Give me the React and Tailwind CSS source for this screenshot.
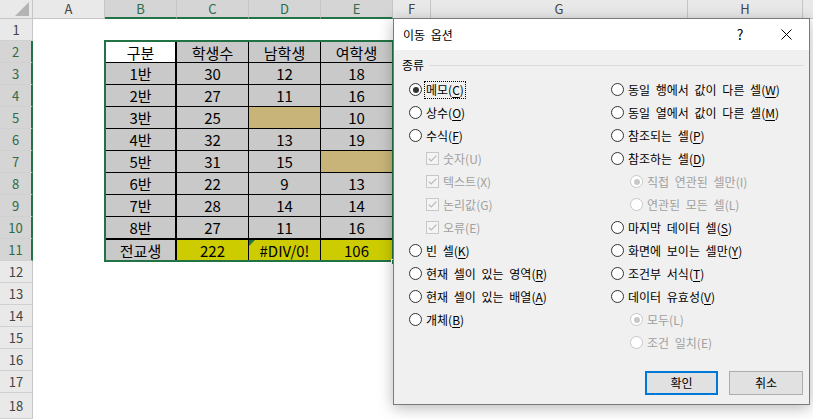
import React from "react";

const columns = [
  { label: "A", w: "w-[72px]" },
  { label: "B", w: "w-[72px]", sel: true },
  { label: "C", w: "w-[72px]", sel: true },
  { label: "D", w: "w-[72px]", sel: true },
  { label: "E", w: "w-[72px]", sel: true },
  { label: "F", w: "w-[38px]" },
  { label: "G", w: "w-[257px]" },
  { label: "H", w: "w-[115px]" },
];

const rows = [
  ["구분", "학생수", "남학생", "여학생"],
  ["1반", "30", "12", "18"],
  ["2반", "27", "11", "16"],
  ["3반", "25", null, "10"],
  ["4반", "32", "13", "19"],
  ["5반", "31", "15", null],
  ["6반", "22", "9", "13"],
  ["7반", "28", "14", "14"],
  ["8반", "27", "11", "16"],
  ["전교생", "222", "#DIV/0!", "106"],
];

const leftOptions = [
  { text: "메모", hot: "C", checked: true, focus: true },
  { text: "상수", hot: "O" },
  { text: "수식", hot: "F" },
  { kind: "check", text: "숫자", hot: "U", disabled: true },
  { kind: "check", text: "텍스트", hot: "X", disabled: true },
  { kind: "check", text: "논리값", hot: "G", disabled: true },
  { kind: "check", text: "오류", hot: "E", disabled: true },
  { text: "빈 셀", hot: "K" },
  { text: "현재 셀이 있는 영역", hot: "R" },
  { text: "현재 셀이 있는 배열", hot: "A" },
  { text: "개체", hot: "B" },
];

const rightOptions = [
  { text: "동일 행에서 값이 다른 셀", hot: "W" },
  { text: "동일 열에서 값이 다른 셀", hot: "M" },
  { text: "참조되는 셀", hot: "P" },
  { text: "참조하는 셀", hot: "D" },
  { text: "직접 연관된 셀만", hot: "I", disabled: true, checked: true, sub: true },
  { text: "연관된 모든 셀", hot: "L", disabled: true, sub: true },
  { text: "마지막 데이터 셀", hot: "S" },
  { text: "화면에 보이는 셀만", hot: "Y" },
  { text: "조건부 서식", hot: "T" },
  { text: "데이터 유효성", hot: "V" },
  { text: "모두", hot: "L", disabled: true, checked: true, sub: true },
  { text: "조건 일치", hot: "E", disabled: true, sub: true },
];

function Radio({ checked, disabled }) {
  return (
    <span
      className={`flex h-[13px] w-[13px] shrink-0 items-center justify-center rounded-full border bg-white ${
        disabled ? "border-[#c8c8c8]" : "border-[#333333]"
      }`}
    >
      {checked && (
        <span className={`h-[6px] w-[6px] rounded-full ${disabled ? "bg-[#c8c8c8]" : "bg-[#333333]"}`} />
      )}
    </span>
  );
}

function Check() {
  return (
    <span className="flex h-[13px] w-[13px] shrink-0 items-center justify-center border border-[#c8c8c8] bg-[#f4f4f4]">
      <svg width="11" height="11" viewBox="0 0 11 11">
        <path d="M1.8 5.6 L4.2 8 L9.4 2.6" fill="none" stroke="#b8b8b8" strokeWidth="1.2" />
      </svg>
    </span>
  );
}

function Option({ kind = "radio", text, hot, checked, disabled, focus, sub }) {
  let indent = "";
  if (kind === "check") indent = "pl-[17px]";
  if (sub) indent = "pl-[19px]";
  return (
    <div className={`flex h-[23px] items-center ${indent}`}>
      {kind === "radio" ? <Radio checked={checked} disabled={disabled} /> : <Check />}
      <span
        className={`ml-[2px] whitespace-nowrap border border-dotted px-[1px] text-[12px] leading-[16px] [word-spacing:3px] ${
          focus ? "border-black" : "border-transparent"
        } ${disabled ? "text-[#a0a0a0]" : "text-black"}`}
      >
        {text}(
        {disabled ? hot : <span className="underline underline-offset-2">{hot}</span>})
      </span>
    </div>
  );
}

function Cell({ value, r, c }) {
  const last = r === rows.length - 1;
  let bg = "bg-[#c9c9c9]";
  if (r === 0 && c === 0) bg = "bg-white";
  else if (value === null) bg = "bg-[#c8b478]";
  else if (last && c > 0) bg = "bg-[#cccc00]";
  return (
    <div
      className={`relative flex h-[22px] items-center justify-center border-b border-black text-[15px] leading-none text-black ${bg} ${
        c === 0 ? "border-l border-r-2" : "border-r"
      } ${r === 0 || last ? "border-t" : ""}`}
    >
      {value}
      {value === "#DIV/0!" && (
        <span className="absolute left-0 top-0 h-0 w-0 border-r-[6px] border-t-[6px] border-r-transparent border-t-[#217346]" />
      )}
    </div>
  );
}

function Dialog() {
  return (
    <div className="absolute left-[393px] top-[18px] flex h-[387px] w-[417px] flex-col border border-[#7a7a7a] bg-[#f0f0f0] shadow-[0_3px_14px_rgba(0,0,0,0.28)]">
      {/* title bar */}
      <div className="flex h-[31px] shrink-0 items-center bg-white pl-[9px]">
        <span className="text-[12px] text-black [word-spacing:3px]">이동 옵션</span>
        <span className="ml-auto flex w-[46px] justify-center text-[14px] text-black">?</span>
        <span className="flex w-[46px] justify-center">
          <svg width="11" height="11" viewBox="0 0 11 11">
            <path d="M0.5 0.5 L10.5 10.5 M10.5 0.5 L0.5 10.5" stroke="#000" strokeWidth="1" />
          </svg>
        </span>
      </div>

      {/* group label */}
      <div className="mt-[8px] flex h-[14px] items-center pl-[8px] pr-[5px]">
        <span className="text-[12px] leading-none text-black">종류</span>
        <span className="ml-[5px] h-px flex-1 bg-[#dcdcdc]" />
      </div>

      {/* options */}
      <div className="mt-[6px] flex pl-[15px]">
        <div className="flex w-[202px] flex-col">
          {leftOptions.map((o) => (
            <Option key={o.text} {...o} />
          ))}
        </div>
        <div className="flex flex-1 flex-col">
          {rightOptions.map((o) => (
            <Option key={o.text} {...o} />
          ))}
        </div>
      </div>

      {/* buttons */}
      <div className="mt-auto flex justify-end gap-[11px] pb-[9px] pr-[6px]">
        <button className="flex h-[24px] w-[73px] items-center justify-center border-2 border-[#0078d7] bg-[#e1e1e1] text-[12px] text-black">
          확인
        </button>
        <button className="flex h-[24px] w-[74px] items-center justify-center border border-[#adadad] bg-[#e1e1e1] text-[12px] text-black">
          취소
        </button>
      </div>
    </div>
  );
}

export default function App() {
  const rowNums = Array.from({ length: 18 }, (_, i) => i + 1);

  return (
    <div className="relative flex h-[419px] w-[813px] flex-col overflow-hidden bg-white font-['Noto_Sans_CJK_KR',sans-serif]">
      {/* column headings */}
      <div className="flex h-[19px] shrink-0 bg-[#e9e9e9]">
        <div className="relative w-[33px] shrink-0 border-b border-r border-[#c6c6c6] bg-[#e9e9e9]">
          <svg className="absolute bottom-[2px] right-[3px]" width="14" height="14" viewBox="0 0 14 14">
            <path d="M14 0 L14 14 L0 14 Z" fill="#b4b4b4" />
          </svg>
        </div>
        {columns.map((col) => (
          <div
            key={col.label}
            className={`flex shrink-0 items-center justify-center border-r border-r-[#c6c6c6] text-[13px] ${col.w} ${
              col.sel
                ? "border-b-2 border-b-[#217346] bg-[#d5d5d5] text-[#2f6b47]"
                : "border-b border-b-[#c6c6c6] bg-[#e9e9e9] text-[#444444]"
            }`}
          >
            {col.label}
          </div>
        ))}
        <div className="flex-1 border-b border-[#c6c6c6]" />
      </div>

      <div className="flex flex-1">
        {/* row headings */}
        <div className="flex w-[33px] shrink-0 flex-col">
          {rowNums.map((n) => {
            const sel = n >= 2 && n <= 11;
            return (
              <div
                key={n}
                className={`flex min-h-[22px] items-center justify-center border-b border-b-[#d0d0d0] text-[13px] ${
                  n === 18 ? "flex-1" : "h-[22px] shrink-0"
                } ${
                  sel
                    ? "border-r-2 border-r-[#217346] bg-[#d5d5d5] text-[#2f6b47]"
                    : "border-r border-r-[#c6c6c6] bg-[#e9e9e9] text-[#444444]"
                }`}
              >
                {n}
              </div>
            );
          })}
        </div>

        {/* sheet */}
        <div className="flex flex-1 flex-col">
          <div className="h-[22px] shrink-0" />
          <div className="flex">
            <div className="w-[72px] shrink-0" />
            <div className="relative grid w-[288px] grid-cols-4">
              {rows.map((row, r) => row.map((v, c) => <Cell key={`${r}-${c}`} value={v} r={r} c={c} />))}
              <div className="pointer-events-none absolute -inset-[1px] border-2 border-[#217346]" />
              <div className="absolute -bottom-[4px] -right-[4px] h-[6px] w-[6px] border border-white bg-[#217346]" />
            </div>
          </div>
        </div>
      </div>

      <Dialog />
    </div>
  );
}
